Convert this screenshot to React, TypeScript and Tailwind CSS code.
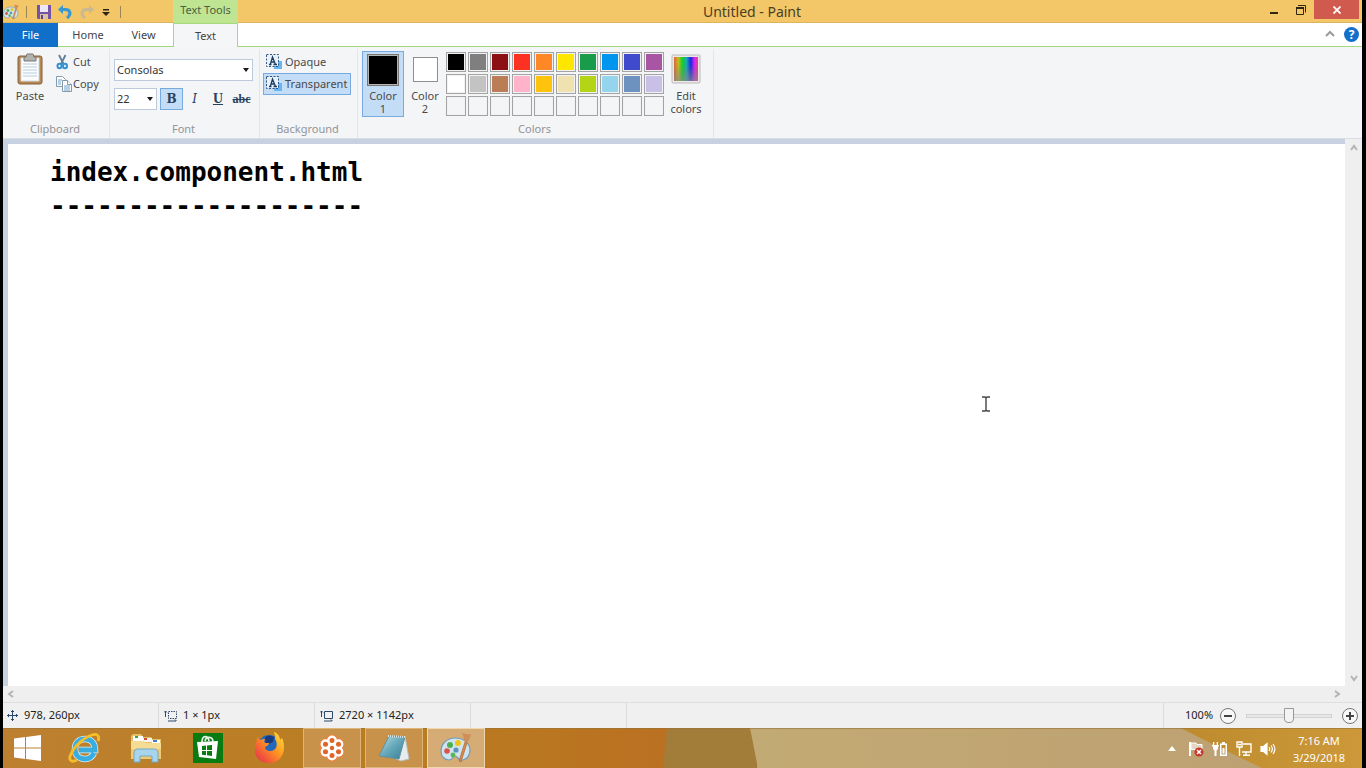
import React from "react";

const paletteTop = [
  "bg-[#000000]", "bg-[#7f7f7f]", "bg-[#8c0f14]", "bg-[#fc3122]", "bg-[#ff8726]",
  "bg-[#ffe600]", "bg-[#189c49]", "bg-[#0095ee]", "bg-[#3f4bcc]", "bg-[#a855a4]",
];
const paletteMid = [
  "bg-[#ffffff]", "bg-[#c3c3c3]", "bg-[#bb7d55]", "bg-[#ffb3cb]", "bg-[#ffc30d]",
  "bg-[#efe2b0]", "bg-[#b3d515]", "bg-[#94d4ec]", "bg-[#6d92c0]", "bg-[#c8c0e6]",
];
const paletteEmpty = Array.from({ length: 10 }, () => "bg-[#f4f5f7]");
const swatches = [...paletteTop, ...paletteMid, ...paletteEmpty];

function PaintIcon({ className }: { className: string }) {
  return (
    <svg className={className} viewBox="0 0 32 32" aria-hidden="true">
      <path d="M15 6C7 6 1 12 1 19c0 6 4 9 8 9 4 0 3-4 6-4s3 5 8 4c5-1 7-6 7-10C30 11 23 6 15 6z" fill="#cfe4ef" stroke="#6f9bb8" strokeWidth="1.2" />
      <circle cx="10" cy="13" r="3" fill="#4caf50" />
      <circle cx="18" cy="11" r="3" fill="#f0c419" />
      <circle cx="7" cy="19" r="2.8" fill="#d9534a" />
      <circle cx="13" cy="23" r="2.4" fill="#58b858" />
      <circle cx="16" cy="18" r="2.6" fill="#5b93bd" />
      <path d="M25 10l2 1-6 19-2-1z" fill="#d98b4a" stroke="#ad6430" strokeWidth=".7" />
      <path d="M25 10c-2-3-1-6-3-9 4 1 6 2 9 1-1 4-2 6-4 9z" fill="#cf8d58" />
    </svg>
  );
}

function Arrow({ dir, className }: { dir: "up" | "down" | "left" | "right"; className: string }) {
  const d = {
    up: "M2 7l3-4 3 4",
    down: "M2 3l3 4 3-4",
    left: "M7 2L3 5l4 3",
    right: "M3 2l4 3-4 3",
  }[dir];
  return (
    <svg className={className} viewBox="0 0 10 10" fill="none" stroke="#b4b4b4" strokeWidth="2" aria-hidden="true">
      <path d={d} />
    </svg>
  );
}

function Caret({ className }: { className: string }) {
  return (
    <svg className={className} viewBox="0 0 6 4" aria-hidden="true">
      <path d="M0 0h6L3 4z" fill="#1a1a1a" />
    </svg>
  );
}

function TextBoxIcon() {
  return (
    <svg className="h-4 w-4 shrink-0" viewBox="0 0 16 16" aria-hidden="true">
      <rect x="8" y="7" width="8" height="8" fill="#69b4f2" />
      <path d="M1 1h11v11H1z" fill="#e9f2fa" />
      <path d="M.5.500h12v12H.5z" fill="none" stroke="#33567e" strokeDasharray="2 1.500" />
      <path d="M3 10.500h2.500M7.500 10.500H11M4.300 10.500L6.500 3l3 7.500M5 8h3.500" fill="none" stroke="#1f3d63" strokeWidth="1.300" />
    </svg>
  );
}

function Group({ label, className, children }: { label: string; className: string; children: React.ReactNode }) {
  return (
    <section aria-label={label} className={`flex h-[89px] flex-col border-r border-[#e3e5e8] ${className}`}>
      <div className="flex flex-1">{children}</div>
      <div className="h-[17px] pr-0.5 text-center leading-4 text-[#929497]">{label}</div>
    </section>
  );
}

function TitleBar() {
  return (
    <header className="flex h-[23px] shrink-0 items-stretch bg-[#f3c667] shadow-[inset_0_-1px_0_#dcb460]">
      <div className="flex w-[170px] items-center">
        <PaintIcon className="h-4 w-4" />
        <span className="ml-[7px] h-3 w-px bg-[#9d8556]" />
        <button aria-label="Save" className="ml-2 p-0.5">
          <svg className="h-[14px] w-[14px]" viewBox="0 0 14 14">
            <path d="M0 0h14v14H1l-1-1z" fill="#7552a4" />
            <path d="M3 0h8v7H3z" fill="#eee8f5" />
            <path d="M3 9h8v5H3z" fill="#d8c4a2" />
            <path d="M4 10h2v4H4z" fill="#604188" />
          </svg>
        </button>
        <button aria-label="Undo" className="ml-1 p-px">
          <svg className="h-[14px] w-[14px]" viewBox="0 0 14 14" fill="none">
            <path d="M4 4.500h3.500c5 0 6 5.500 1.500 8.500" stroke="#3798d2" strokeWidth="3.200" />
            <path d="M5 0v9L0 4.500z" fill="#3798d2" />
          </svg>
        </button>
        <button aria-label="Redo" className="ml-1.5 p-px">
          <svg className="h-[14px] w-[14px]" viewBox="0 0 14 14" fill="none">
            <path d="M10 4.500H6.500c-5 0-6 5.500-1.500 8.500" stroke="#c9b993" strokeWidth="3.200" />
            <path d="M9 0v9l5-4.500z" fill="#c9b993" />
          </svg>
        </button>
        <button aria-label="Customize Quick Access Toolbar" className="ml-[7px] pt-px">
          <svg className="h-[7px] w-2" viewBox="0 0 8 7">
            <path d="M1 0h6v1.500H1zM0 3h8L4 7z" fill="#2b2416" />
          </svg>
        </button>
        <span className="ml-2.5 h-3 w-px bg-[#9d8556]" />
      </div>
      <div className="w-[65px] bg-[#bfe593] text-center text-[11px] leading-5 text-[#4b6140]">Text Tools</div>
      <h1 className="flex-1 pl-1.5 text-center text-[14px] leading-[23px] text-[#4a3e25]">Untitled - Paint</h1>
      <div className="flex items-start pr-[3px]">
        <button aria-label="Minimize" className="flex h-[19px] w-[27px] items-center justify-center">
          <svg className="h-[10px] w-[10px]" viewBox="0 0 10 10"><path d="M1 7h8v2H1z" fill="#2e2513" /></svg>
        </button>
        <button aria-label="Restore" className="flex h-[19px] w-[27px] items-center justify-center">
          <svg className="h-[10px] w-[10px]" viewBox="0 0 10 10" fill="none" stroke="#2e2513">
            <path d="M2 .5h7.500v7" /><path d="M.5 3v6.500h7V3z" /><path d="M0 3h8" strokeWidth="2" />
          </svg>
        </button>
        <button aria-label="Close" className="flex h-[19px] w-[45px] items-center justify-center bg-[#d05a4e]">
          <svg className="h-2 w-2" viewBox="0 0 8 8" stroke="#fff" strokeWidth="1.8"><path d="M.5.5l7 7M7.500.5l-7 7" /></svg>
        </button>
      </div>
    </header>
  );
}

function Tabs() {
  return (
    <nav className="flex h-6 shrink-0 items-stretch bg-white text-[11px] text-[#444]">
      <button className="w-[55px] bg-[#0f6fc9] leading-6 text-white">File</button>
      <div className="flex w-[115px] border-b border-[#a4d97c]">
        <button className="ml-0.5 w-[56px] leading-6">Home</button>
        <button className="w-[55px] leading-6">View</button>
      </div>
      <button className="w-[65px] border-x border-t border-[#a4d97c] bg-[#f5f6f7] leading-6">Text</button>
      <div className="flex flex-1 items-center justify-end border-b border-[#a4d97c] pr-[3px]">
        <button aria-label="Collapse the Ribbon" className="mr-2">
          <svg className="h-3 w-3" viewBox="0 0 12 12" fill="none" stroke="#9a9a9a" strokeWidth="2"><path d="M2 7l4-4 4 4" /></svg>
        </button>
        <button aria-label="Help" className="flex h-[15px] w-[15px] items-center justify-center rounded-full bg-[#146fca] text-[12px] font-bold leading-none text-white">?</button>
      </div>
    </nav>
  );
}

function Ribbon() {
  return (
    <div className="flex h-[92px] shrink-0 border-b border-[#d9dce1] bg-[#f4f5f7] pt-0.5 text-[11px] text-[#4a4a4a]">
      <Group label="Clipboard" className="w-[107px]">
        <button className="ml-px mt-1 flex w-[52px] flex-col items-center self-start">
          <svg className="h-8 w-[26px]" viewBox="0 0 26 32">
            <rect x="1" y="3" width="24" height="28" rx="2" fill="#b58755" stroke="#8a6135" />
            <path d="M4 5h18v23H4z" fill="#fafcfe" stroke="#d6d9dd" />
            <path d="M7 4h2l1-3h6l1 3h2v4H7z" fill="#b3b3ae" stroke="#777" />
            <path d="M6 11h14M6 14h14M6 17h14M6 20h14M6 23h14" stroke="#b9ccdb" />
          </svg>
          <span className="mt-1 leading-[13px]">Paste</span>
        </button>
        <div className="mt-0.5 flex flex-col">
          <button className="flex h-[22px] items-center">
            <svg className="h-4 w-[14px]" viewBox="0 0 14 16" fill="none">
              <path d="M3 1l4.500 9M9.500 1L5 10" stroke="#5f7e9b" strokeWidth="1.800" />
              <ellipse cx="3.500" cy="12" rx="2" ry="2.200" stroke="#3590cf" strokeWidth="2" />
              <ellipse cx="9" cy="12" rx="2" ry="2.200" stroke="#3590cf" strokeWidth="2" />
            </svg>
            <span className="ml-[3px]">Cut</span>
          </button>
          <button className="flex h-[22px] items-center">
            <svg className="h-4 w-4" viewBox="0 0 16 16" fill="#fff" stroke="#8599ab">
              <path d="M.5.500h6l3 3v7h-9z" /><path d="M2 4h4M2 6h3M2 8h3" stroke="#6ca0cb" />
              <path d="M6.500 4.500h5l4 4v7h-9z" /><path d="M11.500 4.500v4h4" /><path d="M8 10h6M8 12h6M8 14h6" stroke="#6ca0cb" />
            </svg>
            <span className="ml-px">Copy</span>
          </button>
        </div>
      </Group>
      <Group label="Font" className="w-[150px]">
        <div className="ml-1 mt-2.5 flex flex-col gap-[7px]">
          <div className="relative">
            <select aria-label="Font family" className="block h-[22px] w-[139px] appearance-none border border-[#bdc9dc] bg-white px-0.5 text-[#333]">
              <option>Consolas</option>
            </select>
            <Caret className="pointer-events-none absolute right-1 top-[9px] h-1 w-1.5" />
          </div>
          <div className="flex text-[#28415f]">
            <div className="relative">
              <select aria-label="Font size" className="block h-[22px] w-[43px] appearance-none border border-[#bdc9dc] bg-white px-0.5 text-[#333]">
                <option>22</option>
              </select>
              <Caret className="pointer-events-none absolute right-1 top-[9px] h-1 w-1.5" />
            </div>
            <button aria-pressed="true" className="ml-[3px] h-[22px] w-[23px] border border-[#78aae0] bg-[#c4ddf7] font-['DejaVu_Serif',serif] text-[12px] font-bold leading-5">B</button>
            <button className="h-[22px] w-[23px] font-['DejaVu_Serif',serif] text-[12px] italic leading-[22px]">I</button>
            <button className="h-[22px] w-6 font-['Liberation_Serif',serif] text-[14px] font-bold leading-[22px] underline">U</button>
            <button className="h-[22px] w-[23px] font-['Liberation_Serif',serif] text-[12px] font-bold leading-[22px] line-through">abc</button>
          </div>
        </div>
      </Group>
      <Group label="Background" className="w-[98px]">
        <div className="ml-[3px] mt-0.5">
          <button className="flex h-[22px] w-[88px] items-center px-[3px]">
            <TextBoxIcon /><span className="ml-[3px]">Opaque</span>
          </button>
          <button aria-pressed="true" className="flex h-[22px] w-[88px] items-center border border-[#78aae0] bg-[#c4ddf7] px-0.5">
            <TextBoxIcon /><span className="ml-[3px]">Transparent</span>
          </button>
        </div>
      </Group>
      <Group label="Colors" className="w-[356px]">
        <button aria-pressed="true" className="ml-1 mt-0.5 flex h-[66px] w-[42px] flex-col items-center border border-[#78aae0] bg-[#c4ddf7] pt-0.5 leading-[13px]">
          <span className="h-8 w-8 border border-[#777] bg-black shadow-[inset_0_0_0_1px_#b5b5b5]" />
          <span className="mt-[3px]">Color</span><span>1</span>
        </button>
        <button className="mt-0.5 flex h-[66px] w-[42px] flex-col items-center pt-1.5 leading-[13px]">
          <span className="h-[25px] w-[25px] border border-[#8e8e8e] bg-white" />
          <span className="mt-[7px]">Color</span><span>2</span>
        </button>
        <div className="mt-[3px] grid grid-cols-10 gap-0.5 self-start">
          {swatches.map((colour, i) => (
            <button
              key={i}
              aria-label={`Palette colour ${i + 1}`}
              className={`h-5 w-5 border border-[#a3a3a3] shadow-[inset_0_0_0_1px_#f2f2f2] ${colour}`}
            />
          ))}
        </div>
        <button className="ml-0.5 mt-1 flex w-10 flex-col items-center self-start leading-[13px]">
          <svg className="h-8 w-[30px]" viewBox="0 0 30 32">
            <defs>
              <linearGradient id="hue">
                <stop offset="0" stopColor="#d8643c" /><stop offset=".18" stopColor="#c4ba20" />
                <stop offset=".35" stopColor="#14cf2c" /><stop offset=".52" stopColor="#1ba9b0" />
                <stop offset=".7" stopColor="#1e24e4" /><stop offset=".86" stopColor="#d52be8" />
                <stop offset="1" stopColor="#ef3d87" />
              </linearGradient>
              <linearGradient id="fade" x2="0" y2="1">
                <stop offset=".3" stopColor="#777" stopOpacity="0" /><stop offset="1" stopColor="#8c8c8c" stopOpacity=".7" />
              </linearGradient>
            </defs>
            <rect x="1" y="2" width="28" height="28" rx="1" fill="#f0e6e6" stroke="#bbb" />
            <path d="M3 4h24v24H3z" fill="url(#hue)" /><path d="M3 4h24v24H3z" fill="url(#fade)" />
          </svg>
          <span className="mt-1">Edit</span><span>colors</span>
        </button>
      </Group>
    </div>
  );
}

function Workspace() {
  return (
    <main className="flex min-h-0 flex-1 flex-col bg-[#efefef]">
      <div className="flex min-h-0 flex-1">
        <div className="relative flex-1 border-l-[5px] border-t-[5px] border-[#c8d1e1] bg-white pl-[42px] pt-[11px]">
          <p className="font-['DejaVu_Sans_Mono','Liberation_Mono',monospace] text-[26px] font-bold leading-[34px] text-black">
            index.component.html<br />--------------------
          </p>
          <svg className="absolute left-[973px] top-[252px] h-4 w-[10px]" viewBox="0 0 10 16" fill="none" stroke="#444" aria-hidden="true">
            <path d="M1 1h3l1 1 1-1h3M1 15h3l1-1 1 1h3M5 2v12" strokeWidth="1.400" />
          </svg>
        </div>
        <div className="ml-px flex w-4 flex-col justify-between">
          <button aria-label="Scroll up" className="flex h-[17px] items-center justify-center"><Arrow dir="up" className="h-[10px] w-[10px]" /></button>
          <button aria-label="Scroll down" className="flex h-[17px] items-center justify-center"><Arrow dir="down" className="h-[10px] w-[10px]" /></button>
        </div>
      </div>
      <div className="flex h-4 shrink-0 justify-between pr-[17px]">
        <button aria-label="Scroll left" className="flex w-4 items-center justify-center"><Arrow dir="left" className="h-[10px] w-[10px]" /></button>
        <button aria-label="Scroll right" className="flex w-4 items-center justify-center"><Arrow dir="right" className="h-[10px] w-[10px]" /></button>
      </div>
    </main>
  );
}

const zoomButton = "flex h-4 w-4 items-center justify-center rounded-full border border-[#777] bg-[#f8f8f8]";

function StatusBar() {
  const cell = "flex w-[156px] items-center border-r border-[#dcdcdc]";
  return (
    <footer className="flex h-[26px] shrink-0 border-t border-[#dedede] bg-[#f0f0f0] text-[11px] text-[#222]">
      <div className={`${cell} pl-1`}>
        <svg className="mr-1.5 h-[11px] w-[11px]" viewBox="0 0 11 11" fill="none" stroke="#2d4a6d"><path d="M5.500 0v11M0 5.500h11M4 2l1.500-1.500L7 2M4 9l1.500 1.500L7 9M2 4L.5 5.500 2 7M9 4l1.500 1.500L9 7" /></svg>
        978, 260px
      </div>
      <div className={`${cell} pl-[5px]`}>
        <svg className="mr-1.5 h-3 w-[13px]" viewBox="0 0 13 12" fill="none" stroke="#2d4a6d"><path d="M1.500 1v6M0 2.500L1.500 1 3 2.500M4 11h8M11 9.500l1.500 1.500" /><path d="M4.500 1.500h8v7h-8z" strokeDasharray="1.500 1" /></svg>
        1 × 1px
      </div>
      <div className={`${cell} pl-[5px]`}>
        <svg className="mr-1.5 h-3 w-[13px]" viewBox="0 0 13 12" fill="none" stroke="#2d4a6d"><path d="M1.500 1v6M0 2.500L1.500 1 3 2.500M4 11h8M11 9.500l1.500 1.500M4.500 1.500h8v7h-8z" /></svg>
        2720 × 1142px
      </div>
      <div className={cell} />
      <div className="ml-auto flex w-[199px] items-center border-l border-[#dcdcdc] pl-[21px] pr-1">
        <span className="w-[35px]">100%</span>
        <button aria-label="Zoom out" className={zoomButton}><svg className="h-2 w-2" viewBox="0 0 8 8"><path d="M0 3h8v2H0z" fill="#444" /></svg></button>
        <input
          type="range"
          aria-label="Zoom"
          min="0"
          max="100"
          defaultValue="50"
          className="mx-[10px] h-4 min-w-0 flex-1 appearance-none bg-transparent [&::-webkit-slider-runnable-track]:h-1 [&::-webkit-slider-runnable-track]:border [&::-webkit-slider-runnable-track]:border-[#d2d2d2] [&::-webkit-slider-runnable-track]:bg-[#e8e8e8] [&::-webkit-slider-thumb]:-mt-[7px] [&::-webkit-slider-thumb]:h-[15px] [&::-webkit-slider-thumb]:w-[10px] [&::-webkit-slider-thumb]:appearance-none [&::-webkit-slider-thumb]:rounded-b [&::-webkit-slider-thumb]:border [&::-webkit-slider-thumb]:border-[#999] [&::-webkit-slider-thumb]:bg-[#f3f3f3]"
        />
        <button aria-label="Zoom in" className={zoomButton}><svg className="h-2 w-2" viewBox="0 0 8 8"><path d="M0 3h8v2H0zM3 0h2v8H3z" fill="#444" /></svg></button>
      </div>
    </footer>
  );
}

function Taskbar() {
  const slot = "flex h-10 w-[58px] items-center justify-center";
  const open = "border border-[#dcb57b] bg-[#c9924a]";
  return (
    <div className="relative h-10 shrink-0 overflow-hidden bg-[#c0a472]">
      <svg className="absolute inset-0 h-full w-full" viewBox="0 0 1359 40" preserveAspectRatio="none" aria-hidden="true">
        <defs>
          <linearGradient id="amber"><stop offset="0" stopColor="#bd8031" /><stop offset=".6" stopColor="#b97d20" /><stop offset="1" stopColor="#bb7022" /></linearGradient>
          <linearGradient id="sand"><stop offset="0" stopColor="#c2aa74" /><stop offset="1" stopColor="#bd9f72" /></linearGradient>
          <linearGradient id="gold"><stop offset="0" stopColor="#bd8b2d" /><stop offset="1" stopColor="#cc983a" /></linearGradient>
        </defs>
        <path d="M0 0h667v40H0z" fill="url(#amber)" />
        <path d="M664 0h90v40h-94z" fill="#a27d39" />
        <path d="M747 0h612v40H755z" fill="url(#sand)" />
        <path d="M1178 0h181v40h-100c-30-14-58-28-81-40z" fill="url(#gold)" />
        <path d="M0 0h1359v1H0z" fill="#94733a" opacity=".6" />
      </svg>
      <div className="relative flex h-10 gap-1">
        <button aria-label="Start" className="flex w-12 items-center justify-center">
          <svg className="h-[26px] w-[27px]" viewBox="0 0 27 26" fill="#fff"><path d="M0 3.500l11-1.500v10.500H0zM12 2l15-2v12.500H12zM0 13.500h11V24L0 22.500zM12 13.500h15V26l-15-2z" /></svg>
        </button>
        <button aria-label="Internet Explorer" className={slot}>
          <svg className="h-8 w-8" viewBox="0 0 32 32" fill="none">
            <path d="M26 21c-2 4-5 6-9 6-6 0-10-4-10-10S11 7 17 7c6 0 10 4 10 11H11" stroke="#d5f2fc" strokeWidth="6.500" />
            <path d="M26 21c-2 4-5 6-9 6-6 0-10-4-10-10S11 7 17 7c6 0 10 4 10 11H11" stroke="#39addf" strokeWidth="5" />
            <path d="M30 9c2-5-1-8-6-6C17 5 7 13 3 22c-3 6 0 9 6 6" stroke="#f6bd28" strokeWidth="2.800" />
          </svg>
        </button>
        <button aria-label="File Explorer" className={slot}>
          <svg className="h-[30px] w-8" viewBox="0 0 32 30">
            <path d="M1 3l2-2h8l2 3h8l1 2h9v20H1z" fill="#e4bf66" />
            <path d="M3 3h10v5H3z" fill="#fff" /><path d="M13 5h9v4h-9z" fill="#f5f5f5" /><path d="M22 7h8v4h-8z" fill="#fff" />
            <path d="M5 3h3v2H5z" fill="#38a14a" /><path d="M14 5h3v2h-3z" fill="#d14b35" /><path d="M23 7h4v2h-4z" fill="#437ec2" />
            <path d="M1 8h13l2 2h15v16H1z" fill="#f5dc95" /><path d="M1 16h30v10H1z" fill="#eeca73" />
            <path d="M4 29V20c0-3 2-4 4-4h16c2 0 4 1 4 4v9h-6v-6H10v6z" fill="#a9d4ed" stroke="#71aac9" />
          </svg>
        </button>
        <button aria-label="Store" className={slot}>
          <svg className="h-[30px] w-[30px]" viewBox="0 0 30 30">
            <path d="M0 0h30v30H0z" fill="#087b11" />
            <path d="M9 9c0-7 6-7 7-1M12 8c1-5 8-5 8 1" fill="none" stroke="#e6f5e7" strokeWidth="1.600" />
            <path d="M4 9l21-1-2 18-17-2z" fill="#fff" />
            <path d="M9 13l4-.5V17H9zM14 12.400l5-.5V17h-5zM9 18h4v4.200L9 21.700zM14 18h5v5l-5-.7z" fill="#087b11" />
          </svg>
        </button>
        <button aria-label="Firefox" className={slot}>
          <svg className="h-8 w-8" viewBox="0 0 32 32">
            <defs><linearGradient id="fox" x1="1" y1="0" x2="0" y2="1"><stop stopColor="#ffe73d" /><stop offset=".45" stopColor="#ff9420" /><stop offset="1" stopColor="#e52552" /></linearGradient></defs>
            <circle cx="15" cy="14" r="11" fill="#2368bd" />
            <path d="M11 5c3-2 6-2 9 0l-1 5-7 3z" fill="#1b3a7d" />
            <path d="M3 5c1 1 2 2 3 3 2-1 3-1 5-1-1 2-1 3 0 4h4c0 2-2 3-4 4 0 4 6 5 9 3 4-3 3-8 1-11 1-3-1-5-1-7 4 1 6 5 6 8l2-2c4 8 3 24-12 25C6 31 0 25 1 16c0-4 2-6 2-11z" fill="url(#fox)" />
          </svg>
        </button>
        <button aria-label="Meeting" className={`${slot} ${open}`}>
          <svg className="h-[30px] w-[30px]" viewBox="0 0 30 30">
            <g fill="#ee8040">
              <circle cx="15" cy="7.500" r="6" /><circle cx="21.500" cy="11.200" r="6" /><circle cx="21.500" cy="18.800" r="6" /><circle cx="15" cy="22.500" r="6" /><circle cx="8.500" cy="18.800" r="6" /><circle cx="8.500" cy="11.200" r="6" />
            </g>
            <g fill="#df6426" stroke="#fff" strokeWidth="2.400">
              <circle cx="15" cy="7.500" r="3.700" /><circle cx="21.500" cy="11.200" r="3.700" /><circle cx="21.500" cy="18.800" r="3.700" /><circle cx="15" cy="22.500" r="3.700" /><circle cx="8.500" cy="18.800" r="3.700" /><circle cx="8.500" cy="11.200" r="3.700" /><circle cx="15" cy="15" r="3.400" />
            </g>
          </svg>
        </button>
        <button aria-label="Notepad" className={`${slot} ${open}`}>
          <svg className="h-[28px] w-8" viewBox="0 0 32 28">
            <defs><linearGradient id="pad" x2="1" y2="1"><stop stopColor="#b9e1e8" /><stop offset=".5" stopColor="#66a7b9" /><stop offset="1" stopColor="#347f98" /></linearGradient></defs>
            <path d="M27 2l4 23-8 2-5-2z" fill="#e7ecec" stroke="#b9bebe" />
            <path d="M11 2l16 1-6 22-20-3z" fill="url(#pad)" stroke="#62919e" />
            <path d="M10 2l17 1" stroke="#dce8e8" strokeWidth="2" strokeDasharray="1 1" />
          </svg>
        </button>
        <button aria-label="Paint" className={`${slot} border border-[#f0d6ac] bg-[#d5ac75]`}><PaintIcon className="h-8 w-8" /></button>
        <div className="ml-auto flex items-center gap-2 pt-px text-[11px] leading-[17px] text-white">
          <button aria-label="Show hidden icons" className="mr-1"><svg className="h-[5px] w-2" viewBox="0 0 8 5"><path d="M0 5l4-5 4 5z" fill="#fff" /></svg></button>
          <svg className="h-4 w-4" viewBox="0 0 16 16" role="img" aria-label="Action Center">
            <path d="M1 1h2v14H1z" fill="#fff" /><path d="M3 2h5l1 1.500h5V10H9L8 8.500H3z" fill="#e2d8c4" stroke="#fff" />
            <circle cx="11" cy="11" r="4.500" fill="#c8372b" /><path d="M9 9l4 4M13 9l-4 4" stroke="#fff" strokeWidth="1.500" />
          </svg>
          <svg className="h-4 w-4" viewBox="0 0 16 16" fill="#fff" role="img" aria-label="Battery">
            <path d="M1 1h1.300v3H1zM4.700 1H6v3H4.700zM0 4h7v1.500H6V8L4.500 9.500V15H2.500V9.500L1 8V5.500H0z" />
            <path d="M10 1h3v1.500h2V15H8V2.500h2zM9.500 4v9.500h4V4z" fillRule="evenodd" /><path d="M10.500 7h2v5.500h-2z" />
          </svg>
          <svg className="h-4 w-4" viewBox="0 0 16 16" fill="none" stroke="#fff" strokeWidth="1.400" role="img" aria-label="Network">
            <path d="M7 3h8v8H6M10 11v3M7 14.300h7M1 1h5v5H1zM3.500 6v9M2 3.500h3" />
          </svg>
          <svg className="h-4 w-4" viewBox="0 0 16 16" fill="none" stroke="#fff" strokeWidth="1.200" role="img" aria-label="Volume">
            <path d="M1 5.500h2.500L7 2.500v11l-3.500-3H1z" fill="#fff" /><path d="M9 6c1 1.300 1 2.700 0 4M11 4.500c1.800 2.300 1.800 4.700 0 7M13 3c2.500 3.300 2.500 6.700 0 10" />
          </svg>
          <time className="ml-1 mr-3 flex w-[62px] flex-col text-center"><span>7:16 AM</span><span>3/29/2018</span></time>
        </div>
      </div>
    </div>
  );
}

export default function App() {
  return (
    <div className="flex h-screen flex-col overflow-hidden bg-black pl-[3px] pr-1 font-['Noto_Sans','Open_Sans',sans-serif]">
      <TitleBar />
      <Tabs />
      <Ribbon />
      <Workspace />
      <StatusBar />
      <Taskbar />
    </div>
  );
}
